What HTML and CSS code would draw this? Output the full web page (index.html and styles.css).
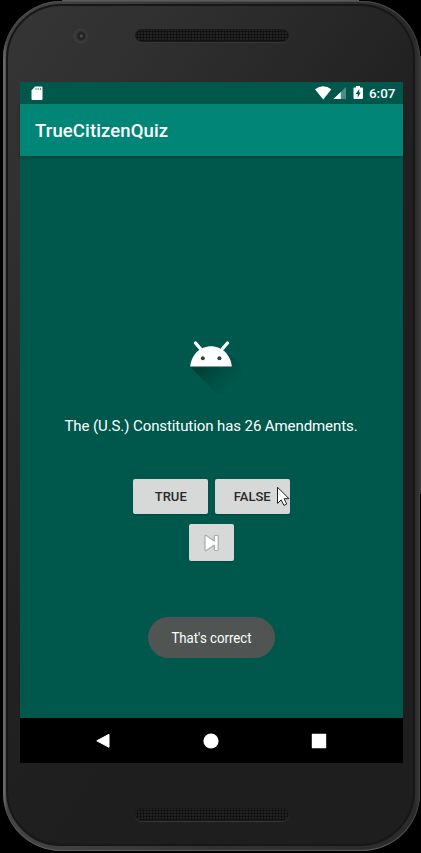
FILE: index.html
```html
<!DOCTYPE html>
<html lang="en">
<head>
<meta charset="utf-8">
<title>TrueCitizenQuiz</title>
<link rel="stylesheet" href="styles.css">
</head>
<body>
<div class="phone">
  <div class="face">
    <header class="forehead">
      <span class="camera"></span>
      <span class="speaker"></span>
    </header>
    <main class="screen">
      <div class="status">
        <svg class="sd" width="12" height="15" viewBox="0 0 12 15"><path fill="#fff" d="M4 .5h6.500q1 0 1 1v11.500q0 1-1 1h-9q-1 0-1-1V4.500z"/><path stroke="#4d8d85" d="M5 2v2M7.200 2v2M9.400 2v2"/></svg>
        <svg class="signals" width="50" height="16" viewBox="0 0 50 16"><path fill="#fff" d="M0 4.300Q8.200-2 16.400 4.300L8.200 14.500z"/><path fill="#4d8d85" d="M31 2v12H18.500z"/><path fill="#fff" d="M25.800 7v7h-7.300z"/><path fill="#fff" d="M41 1h4v1.500h2q1 0 1 1V13q0 1-1 1h-7.500q-1 0-1-1V3.500q0-1 1-1H41z"/><path fill="#00574b" d="M44.200 4l-3.500 5h2v3.500l3-5h-1.500z"/></svg>
        <span class="clock">6:07</span>
      </div>
      <div class="appbar"><h1>TrueCitizenQuiz</h1></div>
      <section class="content">
        <svg class="robot" width="76" height="66" viewBox="0 0 76 66">
          <defs><linearGradient id="shade" x1="28" y1="15" x2="64" y2="51" gradientUnits="userSpaceOnUse"><stop offset=".2" stop-color="#003c34" stop-opacity=".85"/><stop offset=".5" stop-color="#00463c" stop-opacity=".6"/><stop offset="1" stop-color="#00574b" stop-opacity="0"/></linearGradient></defs>
          <path fill="url(#shade)" d="M15 29.500L54 17l22 22v27H51z"/>
          <path d="M20.500 6l5.200 6M52.500 6l-5.200 6" stroke="#fff" stroke-width="3.400" stroke-linecap="round"/>
          <path fill="#fff" d="M15.200 29.800C16 18 25 9.200 36 9.200S56 18 56.800 29.800z"/>
          <path stroke="#29433e" stroke-width=".7" d="M15.500 30H57"/>
          <circle cx="27.800" cy="21.200" r="2" fill="#29433e"/><circle cx="44.400" cy="21.200" r="2" fill="#29433e"/>
        </svg>
        <p class="question"><span>The (U.S.) Constitution has 26 Amendments.</span></p>
        <div class="answers">
          <button class="answer">TRUE</button>
          <button class="answer">FALSE</button>
          <svg class="pointer" width="14" height="22" viewBox="0 0 14 22"><path d="M1.500 1.200v16.200l3.700-3.500 2.700 5.500 2.800-1.300-2.600-5.400H13z" fill="#fff" stroke="#222" stroke-width="1"/></svg>
        </div>
        <button class="next" aria-label="Next"><svg width="16" height="18" viewBox="0 0 16 18"><path fill="#fff" stroke="#aaa" stroke-width="1.200" stroke-linejoin="round" d="M1 2Q1 .8 2.300 1.500l8 5.500V2.300q0-.8.800-.8h2.300q.8 0 .8.800v13.400q0 .8-.8.800h-2.300q-.8 0-.8-.8V11l-8 5.500Q1 17.200 1 16z"/></svg></button>
        <div class="toast"><span>That's correct</span></div>
      </section>
      <nav class="navbar">
        <svg width="16" height="16" viewBox="0 0 16 16"><path d="M14 1.300v13L1.800 7.800z" fill="#fff" stroke="#fff" stroke-linejoin="round"/></svg>
        <svg width="16" height="16" viewBox="0 0 16 16"><circle cx="8" cy="8" r="7.600" fill="#fff"/></svg>
        <svg width="16" height="16" viewBox="0 0 16 16"><rect x=".8" y=".8" width="14.400" height="14.400" rx=".6" fill="#fff"/></svg>
      </nav>
    </main>
    <footer class="chin"><span class="speaker"></span></footer>
  </div>
</div>
</body>
</html>
```
FILE: styles.css
```css
* { box-sizing: border-box; }
body {
  margin: 0;
  height: 853px;
  padding: 1px 1px 2px 3px;
  overflow: hidden;
  background:
    linear-gradient(#5b5b5b, #5b5b5b) 62px 0 / 297px 2px no-repeat,
    linear-gradient(#373737, #373737) 420px 56px / 1px 438px no-repeat,
    #000;
  font-family: Roboto, "Liberation Sans", sans-serif;
}
.phone {
  height: 850px;
  padding: 3px 5px 5px 3px;
  border-radius: 58px;
  background: linear-gradient(90deg, #777 0, #444 4px, #333 50%, #2a2a2a 412px, #383838 417px);
  box-shadow: inset 0 -1px 1px #606060, inset 0 1px 1px #505050;
}
.face {
  height: 842px;
  padding: 0 12px;
  border: 2px solid #171717;
  border-radius: 55px;
  background:
    linear-gradient(125deg, #353536 0, #303030 130px, #222 360px, #1e1e1e 520px);
}
.forehead {
  display: flex;
  height: 76px;
  padding: 23px 0 0 52px;
  align-items: flex-start;
}
.camera {
  width: 16px;
  height: 16px;
  border-radius: 50%;
  margin: -1px 47px 0 0;
  background: radial-gradient(circle at 58% 50%, #4b4b4e 0 1px, #222224 2px 3px, #343436 5px, #3c3c3e 7px, #343434 8px);
}
.speaker {
  width: 154px;
  height: 13px;
  border-radius: 7px;
  border: 1px solid #1a1a1a;
  background: radial-gradient(circle, #0c0c0c .8px, #222 1.400px) 0 0 / 3px 3px;
  box-shadow: 0 1px 1px #363636;
}
.screen {
  width: 383px;
  height: 681px;
  background: #00574b;
  color: #fff;
}
.status {
  display: flex;
  align-items: center;
  height: 22px;
  padding: 0 8px 0 11px;
}
.signals { margin-left: auto; }
.clock {
  width: 26px;
  margin-left: 4.500px;
  font-size: 13.400px;
  font-weight: 500;
  line-height: 23px;
  white-space: nowrap;
}
.appbar {
  display: flex;
  align-items: center;
  height: 52px;
  padding-left: 15px;
  background: #008577;
  box-shadow: 0 1px 3px rgba(0, 0, 0, .35);
}
h1 {
  margin: 2px 0 0;
  font-size: 18.500px;
  font-weight: 500;
  line-height: 24px;
  letter-spacing: .12px;
}
.content {
  display: flex;
  flex-direction: column;
  align-items: center;
  height: 562px;
  padding-top: 181px;
}
.robot { margin-left: 3px; }
.question {
  margin: 12px 1px 0 0;
  font-size: 15px;
  line-height: 22px;
  letter-spacing: -.09px;
  white-space: nowrap;
}
.answers {
  position: relative;
  display: flex;
  gap: 6.500px;
  margin: 42px 0 0;
}
.answer, .next {
  padding: 0;
  border: 0;
  border-radius: 2px;
  background: #d7d8d8;
  color: #292929;
  box-shadow: 0 1px 1px rgba(0, 0, 0, .2);
}
.answer {
  width: 75px;
  height: 34.500px;
  font: 500 13px/36px Roboto, "Liberation Sans", sans-serif;
}
.pointer {
  position: absolute;
  right: 0;
  top: 7px;
}
.next {
  display: flex;
  align-items: center;
  justify-content: center;
  width: 45px;
  height: 37px;
  margin-top: 10.500px;
}
.toast {
  width: 127px;
  height: 41px;
  margin: 56px 1px 0 0;
  border-radius: 21px;
  background: #505554;
  font-size: 15px;
  line-height: 43px;
  text-align: center;
  white-space: nowrap;
}
.toast span {
  display: inline-block;
  transform: scaleX(.88);
}
.navbar {
  display: flex;
  align-items: center;
  justify-content: space-between;
  height: 45px;
  padding: 0 76px 0 75px;
  background: #000;
}
.chin {
  display: flex;
  padding: 45px 0 0 115px;
}
```
